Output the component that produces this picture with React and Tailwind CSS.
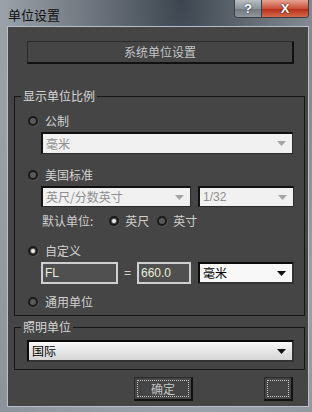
const cjk = "font-['Noto_Sans_CJK_SC','Noto_Sans',sans-serif]";

const Radio = ({ checked }) => (
  <span className="w-[10px] h-[10px] rounded-full border-2 border-[#1a1a1a] bg-[#5a5a5a] flex items-center justify-center shrink-0 shadow-[1px_1px_0_#555]">
    {checked && <span className="w-[4px] h-[4px] rounded-full bg-[#eeeeee]" />}
  </span>
)

const Arrow = ({ color }) => (
  <svg width="9" height="5" viewBox="0 0 9 5" className="shrink-0">
    <path d="M0 0h9L4.5 5z" fill={color} />
  </svg>
)

const Select = ({ text, disabled, className, latin }) => (
  <div
    className={`flex items-center justify-between px-[3px] pr-[6px] ${
      disabled
        ? "bg-[#f1f1f1] text-[#8e8e8e] border-t-2 border-l-2 border-[#111] border-b border-r border-b-[#2c2c2c] border-r-[#2c2c2c]"
        : "bg-[#f8f8f8] text-black border-t-2 border-l-2 border-[#0a0a0a] border-b-2 border-r-2 border-b-[#333] border-r-[#333]"
    } ${className}`}
  >
    <span className={`text-[12px] leading-none ${latin ? "font-['Liberation_Sans',sans-serif]" : cjk}`}>{text}</span>
    <Arrow color={disabled ? "#a4a4a4" : "#111"} />
  </div>
)

const Field = ({ text, className }) => (
  <div className={`bg-[#505050] border-2 border-[#cfcfcf] flex items-center px-[2px] ${className}`}>
    <span className="text-[12px] leading-none text-[#ecebd8] font-['Liberation_Sans',sans-serif]">{text}</span>
  </div>
)

const Group = ({ label, className, children }) => (
  <div className={`relative border border-[#161616] ${className}`}>
    <span className={`absolute left-[6px] top-[-9px] px-[2px] bg-[#454545] text-[12px] leading-[16px] text-[#d6d6d6] ${cjk}`}>
      {label}
    </span>
    {children}
  </div>
)

const Option = ({ label, checked, className }) => (
  <div className={`flex items-center h-[16px] ml-[13px] ${className}`}>
    <Radio checked={checked} />
    <span className={`ml-[7px] text-[12px] leading-[16px] text-[#d2d2d2] ${cjk}`}>{label}</span>
  </div>
)

export default function App() {
  return (
    <div className="w-[312px] h-[412px] overflow-hidden bg-[radial-gradient(ellipse_at_58%_0%,#3d4650_0%,#6e757e_35%,#9ba1a8_70%,#8b929a_100%)] flex flex-col">
      {/* title bar */}
      <div className="h-[26px] flex items-start shrink-0 relative">
        <span className={`ml-[8px] mt-[7px] text-[13px] leading-[15px] text-[#111] ${cjk}`}>单位设置</span>
        <div className="ml-auto mr-[3px] flex h-[18px] border border-[#3a3f46] border-t-0 rounded-b-[4px] overflow-hidden">
          <div className="w-[27px] bg-[linear-gradient(#b9bec4,#8c939b_50%,#6f777f_51%,#8f969d)] flex items-center justify-center border-r border-[#3a3f46]">
            <span className="text-[13px] font-bold leading-none text-white font-['Liberation_Sans',sans-serif] [text-shadow:0_0_2px_#222]">?</span>
          </div>
          <div className="w-[46px] bg-[linear-gradient(#e7a393,#c9503a_50%,#b22b16_51%,#d9694c)] flex items-center justify-center">
            <span className="text-[13px] font-bold leading-none text-white font-['Liberation_Sans',sans-serif] [text-shadow:0_0_2px_#401008]">X</span>
          </div>
        </div>
      </div>

      {/* client area */}
      <div className="ml-[7px] w-[302px] h-[381px] border border-[#b9c0c7] bg-[#454545] flex flex-col">
        <div className={`ml-[19px] mt-[14px] w-[267px] h-[23px] flex items-center justify-center border border-[#2b2b2b] border-b-2 border-r-2 border-b-[#111] border-r-[#111] text-[12px] text-[#c4c4c4] ${cjk}`}>
          系统单位设置
        </div>

        <Group label="显示单位比例" className="ml-[6px] mt-[32px] w-[291px] h-[220px] flex flex-col">
          <Option label="公制" className="mt-[16px]" />
          <Select text="毫米" disabled className="ml-[26px] mt-[3px] w-[252px] h-[22px]" />

          <Option label="美国标准" className="mt-[13px]" />
          <div className="flex ml-[26px] mt-[3px] gap-[7px]">
            <Select text="英尺/分数英寸" disabled className="w-[150px] h-[21px]" />
            <Select text="1/32" disabled latin className="w-[96px] h-[21px]" />
          </div>

          <div className={`flex items-center h-[16px] ml-[27px] mt-[6px] text-[12px] leading-[16px] text-[#cfcfcf] ${cjk}`}>
            <span>默认单位:</span>
            <span className="ml-[16px]"><Radio checked /></span>
            <span className="ml-[6px]">英尺</span>
            <span className="ml-[8px]"><Radio /></span>
            <span className="ml-[6px]">英寸</span>
          </div>

          <Option label="自定义" checked className="mt-[14px]" />
          <div className="flex items-center ml-[26px] mt-[3px]">
            <Field text="FL" className="w-[77px] h-[22px]" />
            <span className="w-[19px] text-center text-[12px] text-[#d0d0d0] font-['Liberation_Sans',sans-serif]">=</span>
            <Field text="660.0" className="w-[54px] h-[22px]" />
            <Select text="毫米" className="ml-[7px] w-[96px] h-[22px]" />
          </div>

          <Option label="通用单位" className="mt-[10px]" />
        </Group>

        <Group label="照明单位" className="ml-[6px] mt-[11px] w-[291px] h-[43px] flex flex-col">
          <div className="ml-[12px] mt-[12px] w-[267px] h-[22px] flex items-center justify-between pl-[3px] pr-[6px] bg-[linear-gradient(#fafafa,#e6e6e6_50%,#d6d6d6)] border-t-2 border-l-2 border-[#0a0a0a] border-b-2 border-r-2 border-b-[#333] border-r-[#333]">
            <span className={`text-[12px] leading-none text-black ${cjk}`}>国际</span>
            <Arrow color="#111" />
          </div>
        </Group>

        <div className="flex mt-[7px]">
          <div className="ml-[126px] w-[59px] h-[24px] border border-[#2a2a2a] border-b-2 border-r-2 border-b-[#111] border-r-[#111] p-[2px]">
            <div className={`w-full h-full border border-dotted border-[#c8c8c8] flex items-center justify-center text-[12px] text-[#c4c4c4] ${cjk}`}>
              确定
            </div>
          </div>
          <div className="ml-[71px] w-[29px] h-[24px] border border-[#2a2a2a] border-b-2 border-r-2 border-b-[#111] border-r-[#111] p-[2px]">
            <div className="w-full h-full border border-dotted border-[#c8c8c8]" />
          </div>
        </div>
      </div>
    </div>
  )
}
